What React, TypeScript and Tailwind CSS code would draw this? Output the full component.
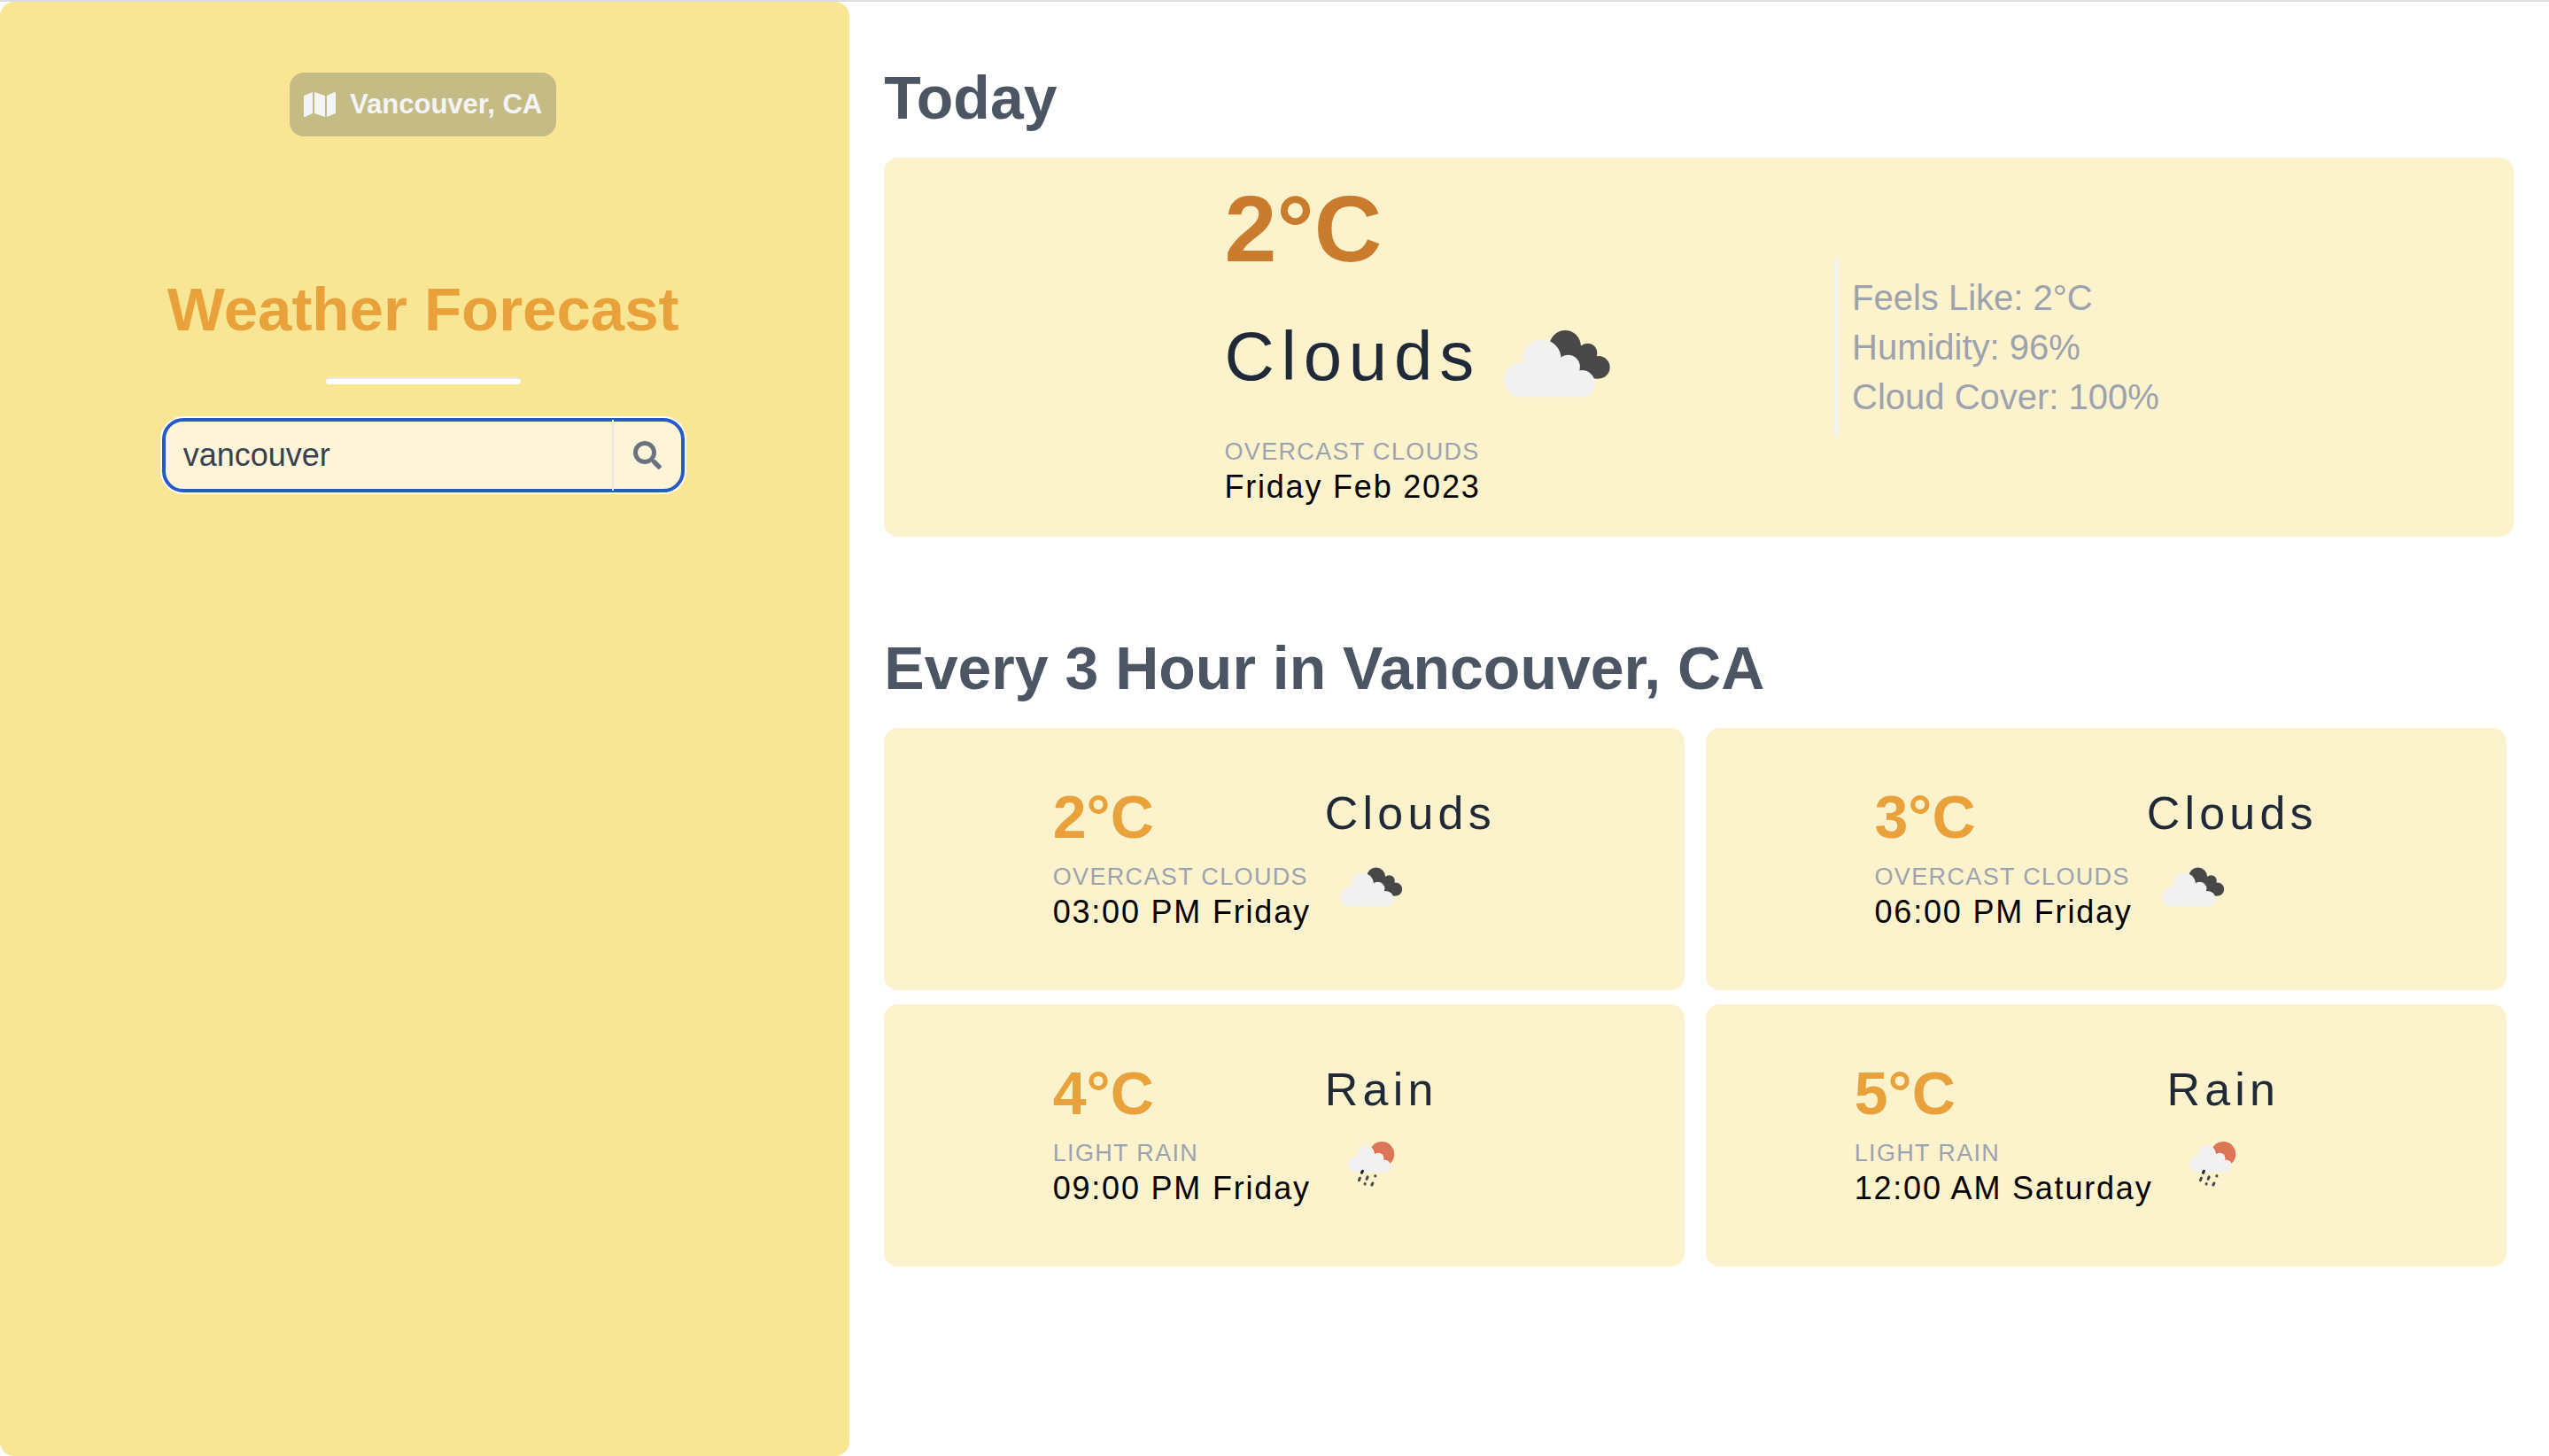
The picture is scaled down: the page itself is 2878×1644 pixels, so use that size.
import { useState } from "react";
import { FaMap, FaSearch } from "react-icons/fa";

type Condition = "Clouds" | "Rain";

interface HourlyForecast {
  temperature: number;
  condition: Condition;
  description: string;
  time: string;
}

const hourly: HourlyForecast[] = [
  { temperature: 2, condition: "Clouds", description: "Overcast clouds", time: "03:00 PM Friday" },
  { temperature: 3, condition: "Clouds", description: "Overcast clouds", time: "06:00 PM Friday" },
  { temperature: 4, condition: "Rain", description: "Light rain", time: "09:00 PM Friday" },
  { temperature: 5, condition: "Rain", description: "Light rain", time: "12:00 AM Saturday" },
];

const todayDetails = ["Feels Like: 2°C", "Humidity: 96%", "Cloud Cover: 100%"];

function CloudsIcon({ className }: { className: string }) {
  return (
    <svg viewBox="0 0 368 232" className={className} role="img" aria-label="Overcast clouds">
      <g fill="#484848">
        <circle cx="213" cy="56" r="53" />
        <circle cx="289" cy="79" r="32" />
        <circle cx="326" cy="128" r="38" />
        <path d="M190 50 266 53 290 79 321 91 326 166H260L190 110Z" />
      </g>
      <g fill="#f2f1f1">
        <circle cx="64" cy="170" r="58" />
        <circle cx="135" cy="98" r="64" />
        <circle cx="223" cy="126" r="40" />
        <circle cx="269" cy="183" r="45" />
        <path d="M64 228V130L100 110 223 100 262 150 269 228Z" />
      </g>
    </svg>
  );
}

function RainIcon({ className }: { className: string }) {
  return (
    <svg viewBox="0 0 161 156" className={className} role="img" aria-label="Light rain">
      <defs>
        <clipPath id="rain-sun">
          <circle cx="117" cy="45" r="42" />
        </clipPath>
      </defs>
      <circle cx="117" cy="45" r="42" fill="#dd7656" />
      <g clipPath="url(#rain-sun)" fill="#e2512f">
        <circle cx="63" cy="45" r="32" />
        <circle cx="105" cy="59" r="21" />
        <circle cx="126" cy="86" r="23" />
      </g>
      <g fill="#f2f1f1">
        <circle cx="30" cy="79" r="27" />
        <circle cx="63" cy="45" r="30" />
        <circle cx="105" cy="59" r="19" />
        <circle cx="126" cy="85" r="21" />
        <path d="M30 106V60L45 50 105 45 124 70 126 106Z" />
      </g>
      <g stroke="#484848" strokeWidth="9" strokeLinecap="round">
        <path d="M52 102 49 108" stroke="#222222" />
        <path d="M43 126 40 133" />
        <path d="M69 122 66 129" />
        <path d="M95 118V119" />
        <path d="M60 145V146" />
        <path d="M86 143 83 149" />
      </g>
    </svg>
  );
}

function Sidebar() {
  const [query, setQuery] = useState("vancouver");

  return (
    <aside className="flex w-1/3 flex-col items-center rounded-2xl bg-[#f9e694] pt-20 pr-5 pl-4">
      <div className="flex items-center gap-4 rounded-2xl bg-[#c5bb85] px-4 py-3 text-[#f3f4f6]">
        <FaMap className="h-8 w-9" />
        <span className="text-[31px] leading-[48px] font-bold">Vancouver, CA</span>
      </div>
      <h1 className="mt-[156px] text-[69px] leading-[80px] font-bold text-[#e9a23b]">
        Weather Forecast
      </h1>
      <hr className="mt-9 h-2 w-[220px] rounded-sm border-t-2 border-[#e5e7eb] bg-white" />
      <form
        className="mt-[38px] flex h-[84px] w-[590px] max-w-full rounded-3xl border-4 border-[#245bc8] bg-[#fef4d7] ring-2 ring-white"
        onSubmit={(event) => event.preventDefault()}
      >
        <input
          type="text"
          aria-label="City"
          value={query}
          onChange={(event) => setQuery(event.target.value)}
          className="min-w-0 flex-1 bg-transparent pl-5 text-[36px] text-[#374151] outline-none"
        />
        <button
          type="submit"
          aria-label="Search"
          className="-my-[2px] flex w-[78px] items-center justify-center border-l-2 border-[#e5e7eb] text-[#6b7280]"
        >
          <FaSearch className="size-8" />
        </button>
      </form>
    </aside>
  );
}

function TodayCard() {
  return (
    <article className="flex items-center justify-center gap-[252px] rounded-2xl bg-[#fcf2cb]">
      <div className="pt-4 pb-9">
        <p className="text-[106px] leading-[128px] font-bold text-[#ca7c2e]">2°C</p>
        <div className="mt-8 flex items-end gap-6">
          <p className="text-[78px] leading-[96px] tracking-widest text-[#1f2937]">Clouds</p>
          <CloudsIcon className="w-[123px]" />
        </div>
        <p className="mt-10 text-[27px] leading-[40px] tracking-wider text-[#9ca3af] uppercase">
          Overcast clouds
        </p>
        <p className="text-[36px] leading-[40px] tracking-wider text-black">Friday Feb 2023</p>
      </div>
      <ul className="border-l-4 border-[#f3f4f6] p-4 text-[40px] leading-[56px] text-[#9ca3af]">
        {todayDetails.map((detail) => (
          <li key={detail}>{detail}</li>
        ))}
      </ul>
    </article>
  );
}

function HourlyCard({ temperature, condition, description, time }: HourlyForecast) {
  return (
    <article className="mr-2 flex justify-center gap-4 rounded-2xl bg-[#fcf2cb] pt-15 pb-17">
      <div>
        <p className="text-[68px] leading-[80px] font-bold text-[#e9a23b]">{temperature}°C</p>
        <p className="mt-2 text-[27px] leading-[40px] tracking-wider text-[#9ca3af] uppercase">
          {description}
        </p>
        <p className="text-[36px] leading-[40px] tracking-wider text-black">{time}</p>
      </div>
      <div className="w-[216px]">
        <p className="text-[52px] leading-[72px] tracking-widest text-[#1f2937]">{condition}</p>
        <div className="flex h-24 w-[104px] items-center justify-center">
          {condition === "Clouds" ? (
            <CloudsIcon className="w-[72px]" />
          ) : (
            <RainIcon className="w-[54px]" />
          )}
        </div>
      </div>
    </article>
  );
}

export default function App() {
  return (
    <div className="flex min-h-screen border-t-2 border-[#dcdcdc] bg-white font-['Liberation_Sans',Arial,sans-serif]">
      <Sidebar />
      <main className="flex-1 pt-17 pr-10 pb-10 pl-[39px]">
        <section>
          <h2 className="mb-7 text-[68px] leading-[80px] font-bold text-[#4b5563]">Today</h2>
          <TodayCard />
        </section>
        <section className="mt-27">
          <h2 className="mb-7 text-[68px] leading-[80px] font-bold text-[#4b5563]">
            Every 3 Hour in Vancouver, CA
          </h2>
          <div className="grid grid-cols-2 gap-4">
            {hourly.map((forecast) => (
              <HourlyCard key={forecast.time} {...forecast} />
            ))}
          </div>
        </section>
      </main>
    </div>
  );
}
